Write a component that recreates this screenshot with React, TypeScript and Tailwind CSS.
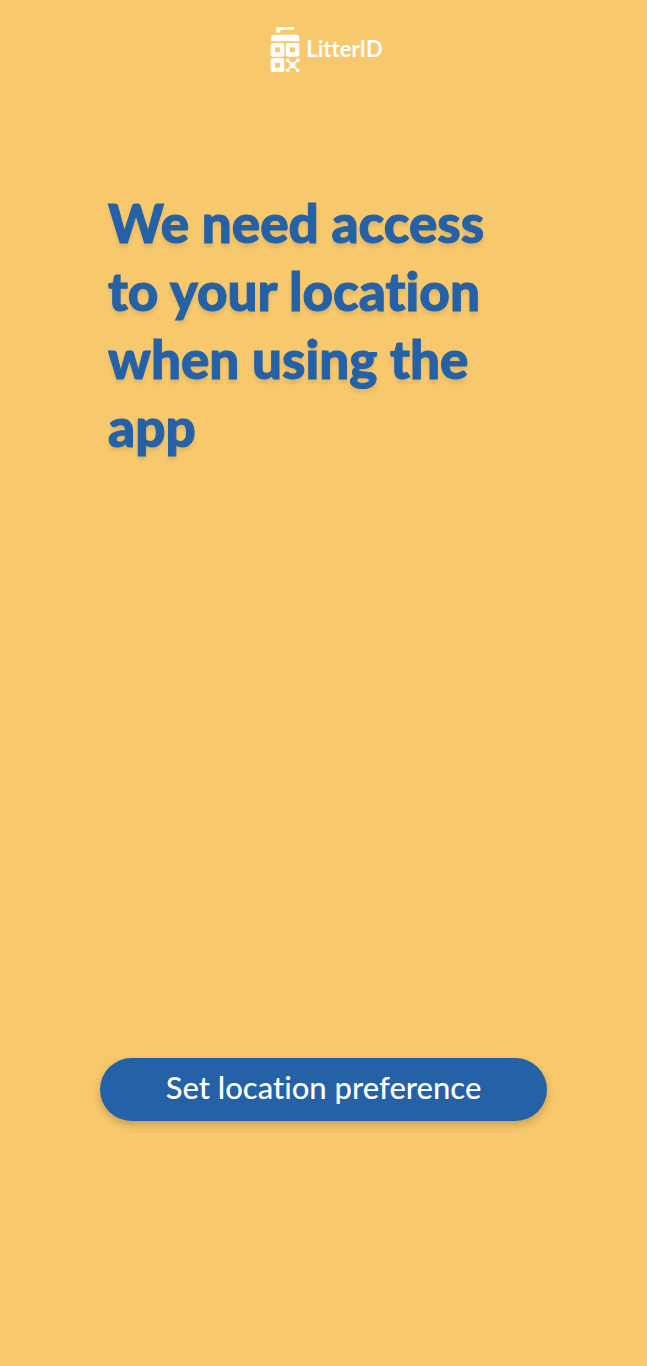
function LogoMark() {
  return (
    <svg className="h-[46px] w-[30px]" viewBox="0 0 90 138" fill="white" aria-hidden="true">
      <path d="M20 0H71Q73 0 73 3V5Q73 8 71 8H31V15Q31 17 29 17H21Q19 17 19 15V2Q19 0 20 0Z" />
      <path d="M12 23H79Q88 24 88 33V41Q88 43 86 43H5Q3 43 3 41V33Q3 24 12 23Z" />
      <path
        fillRule="evenodd"
        d="M8 48H37Q43 48 43 54V83Q43 89 37 89H8Q2 89 2 83V54Q2 48 8 48ZM17 61Q15 61 15 63V74Q15 76 17 76H28Q30 76 30 74V63Q30 61 28 61Z"
      />
      <path
        fillRule="evenodd"
        d="M53 48H82Q88 48 88 54V83Q88 89 82 89H53Q47 89 47 83V54Q47 48 53 48ZM62 61Q60 61 60 63V74Q60 76 62 76H73Q75 76 75 74V63Q75 61 73 61Z"
      />
      <path
        fillRule="evenodd"
        d="M8 94H37Q43 94 43 100V129Q43 135 37 135H8Q2 135 2 129V100Q2 94 8 94ZM17 107Q15 107 15 109V120Q15 122 17 122H28Q30 122 30 120V109Q30 107 28 107Z"
      />
      <rect x="48" y="95" width="10" height="10" rx="1" />
      <rect x="78" y="95" width="10" height="10" rx="1" />
      <rect x="59" y="106" width="17" height="17" rx="1" />
      <rect x="48" y="125" width="10" height="10" rx="1" />
      <rect x="78" y="125" width="10" height="10" rx="1" />
      <rect x="55" y="102" width="6" height="6" />
      <rect x="74" y="102" width="6" height="6" />
      <rect x="55" y="121" width="6" height="6" />
      <rect x="74" y="121" width="6" height="6" />
    </svg>
  );
}

export default function App() {
  return (
    <div className="flex min-h-screen flex-col bg-[#f8c86c] font-['Lato',sans-serif] [font-variant-ligatures:none]">
      <header className="flex items-center justify-center gap-1.5 pt-[27px] pl-1.5">
        <LogoMark />
        <span className="pb-0.5 text-[22px] leading-6 font-bold text-white">LitterID</span>
      </header>
      <main className="flex grow flex-col justify-between px-[100px] pt-[116px] pb-[245px]">
        <h1 className="px-2 text-[53px] leading-[68px] font-black text-[#2561a7] [-webkit-text-stroke:1px_#2561a7] [text-shadow:0_4px_4px_rgba(0,0,0,0.1)]">
          We need access
          <br />
          to your location
          <br />
          when using the
          <br />
          app
        </h1>
        <button
          type="button"
          className="h-[63px] w-full rounded-full bg-[#2561a7] pb-1.5 text-[31px] leading-10 font-medium text-white shadow-[0_4px_8px_rgba(0,0,0,0.2)]"
        >
          Set location preference
        </button>
      </main>
    </div>
  );
}
